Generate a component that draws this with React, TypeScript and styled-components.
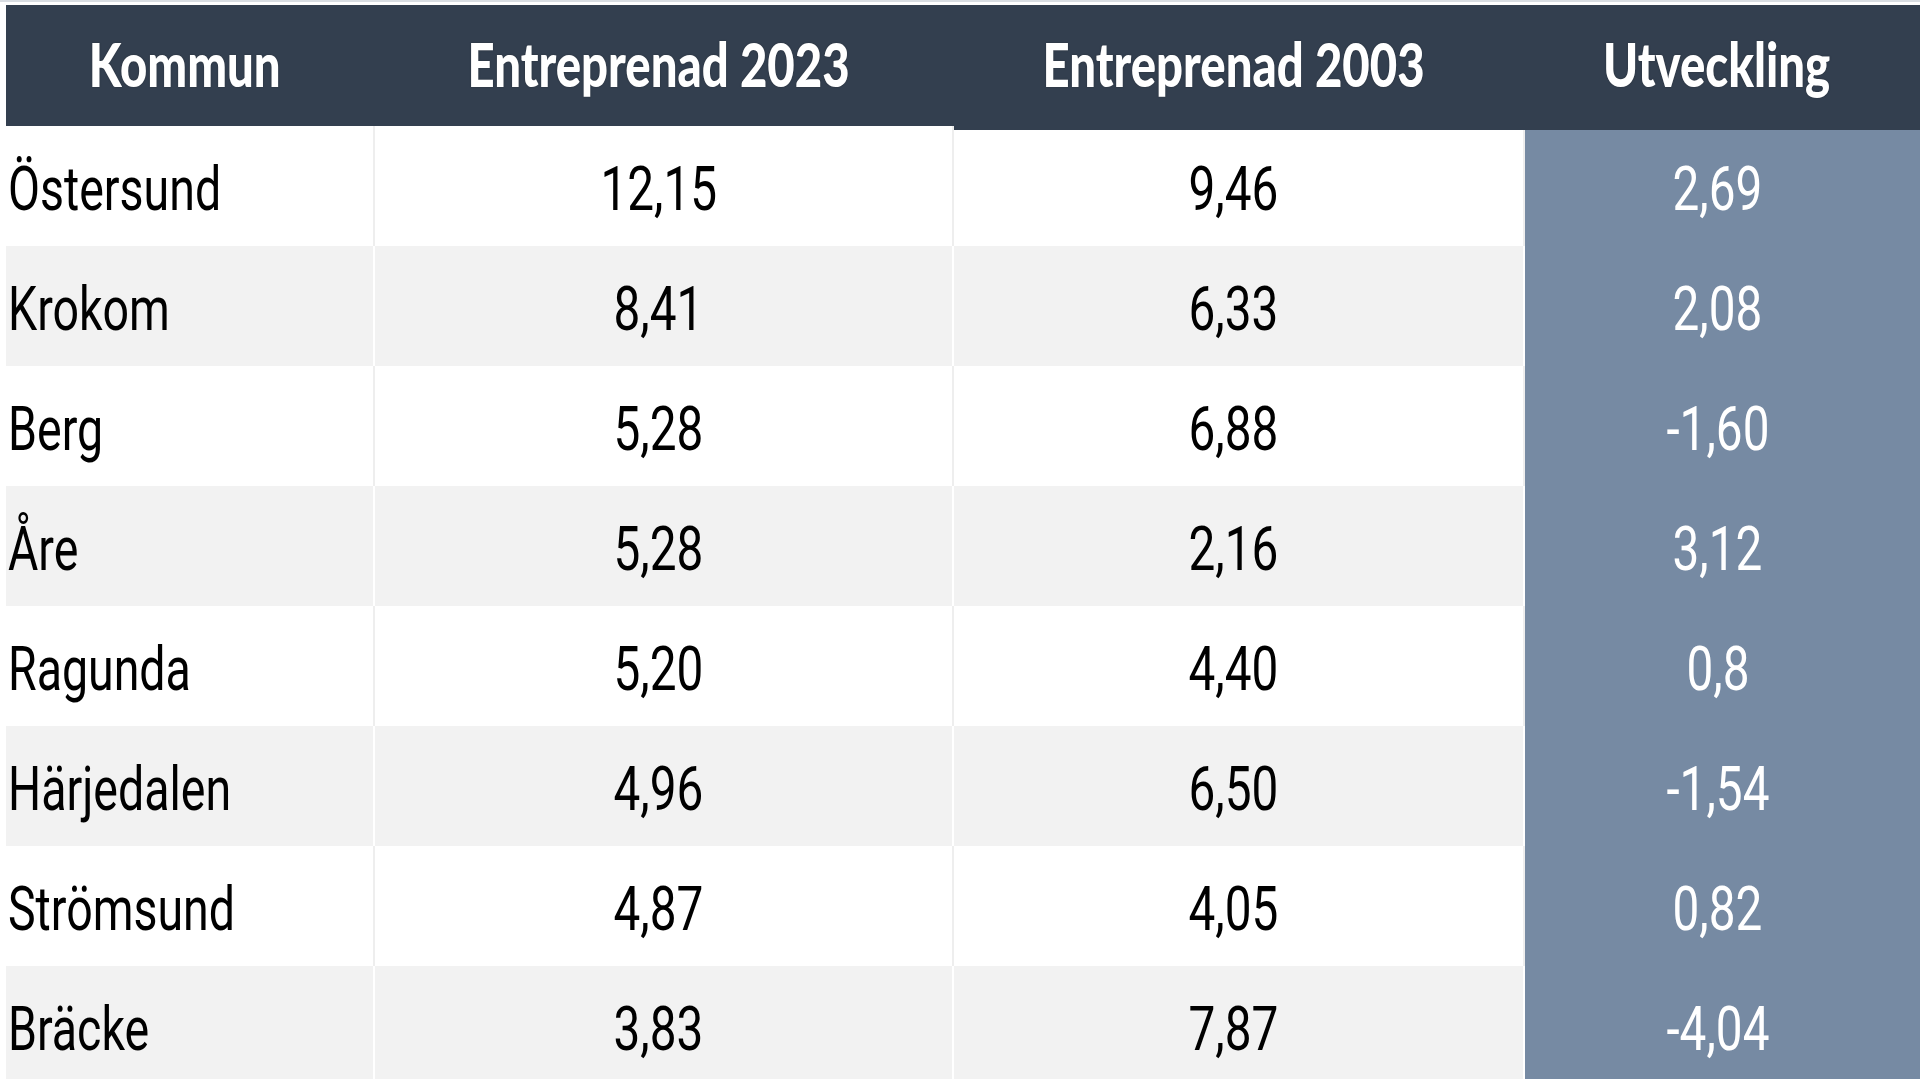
import styled, { createGlobalStyle } from "styled-components";

const rows = [
  { name: "Östersund", y2023: "12,15", y2003: "9,46", diff: "2,69" },
  { name: "Krokom", y2023: "8,41", y2003: "6,33", diff: "2,08" },
  { name: "Berg", y2023: "5,28", y2003: "6,88", diff: "-1,60" },
  { name: "Åre", y2023: "5,28", y2003: "2,16", diff: "3,12" },
  { name: "Ragunda", y2023: "5,20", y2003: "4,40", diff: "0,8" },
  { name: "Härjedalen", y2023: "4,96", y2003: "6,50", diff: "-1,54" },
  { name: "Strömsund", y2023: "4,87", y2003: "4,05", diff: "0,82" },
  { name: "Bräcke", y2023: "3,83", y2003: "7,87", diff: "-4,04" },
];

const App = () => {
  return (
    <>
      <GlobalStyle />
      <Page>
        <Table>
          <HeadCell>
            <HeadText>Kommun</HeadText>
          </HeadCell>
          <HeadCell>
            <HeadText>Entreprenad 2023</HeadText>
          </HeadCell>
          <HeadCell $extend>
            <HeadText>Entreprenad 2003</HeadText>
          </HeadCell>
          <HeadCell $extend>
            <HeadText>Utveckling</HeadText>
          </HeadCell>

          {rows.map((r, i) => (
            <Row key={r.name} $odd={i % 2 === 1}>
              <NameCell>
                <BodyText $left>{r.name}</BodyText>
              </NameCell>
              <NumCell>
                <BodyText>{r.y2023}</BodyText>
              </NumCell>
              <NumCell>
                <BodyText>{r.y2003}</BodyText>
              </NumCell>
              <DiffCell>
                <BodyText>{r.diff}</BodyText>
              </DiffCell>
            </Row>
          ))}
        </Table>
      </Page>
    </>
  );
};

export default App;

const GlobalStyle = createGlobalStyle`
  html, body {
    margin: 0;
    padding: 0;
    background: #ffffff;
    overflow: hidden;
  }
`;

const Page = styled.div`
  width: 1920px;
  height: 1079px;
  overflow: hidden;
  padding: 3px 0 0 6px;
  box-sizing: border-box;
  border-top: 2px solid #d9dde2;
`;

const Table = styled.div`
  display: grid;
  grid-template-columns: 369px 579px 571px 395px;
  grid-auto-rows: 120px;
  grid-template-rows: 121px;
  width: 1914px;
`;

const HeadCell = styled.div<{ $extend?: boolean }>`
  background: #333f4f;
  display: flex;
  align-items: center;
  justify-content: center;
  padding-right: 12px;
  position: relative;
  ${(p) => p.$extend && "box-shadow: 0 4px 0 #333f4f; z-index: 1;"}
`;

const HeadText = styled.span`
  display: inline-block;
  font-family: Lato, "Open Sans", sans-serif;
  font-weight: 900;
  font-size: 61px;
  color: #ffffff;
  white-space: nowrap;
  transform: scaleX(0.775);
  text-shadow: 0 0 2px rgba(0, 0, 0, 0.35);
  margin-top: -4px;
`;

const Row = styled.div<{ $odd: boolean }>`
  display: contents;
  --row-bg: ${(p) => (p.$odd ? "#f2f2f2" : "#ffffff")};
  --row-line: ${(p) => (p.$odd ? "#ffffff" : "#eeeeee")};
`;

const Cell = styled.div`
  display: flex;
  align-items: center;
  background: var(--row-bg);
  border-right: 2px solid var(--row-line);
  box-sizing: border-box;
  overflow: hidden;
`;

const NameCell = styled(Cell)`
  justify-content: flex-start;
  padding-left: 2px;
`;

const NumCell = styled(Cell)`
  justify-content: center;
  padding-right: 10px;
`;

const DiffCell = styled(Cell)`
  justify-content: center;
  padding-right: 10px;
  background: #768aa3;
  border-right: none;
  color: #ffffff;
`;

const BodyText = styled.span<{ $left?: boolean }>`
  display: inline-block;
  font-family: Roboto, "Liberation Sans", sans-serif;
  font-weight: 400;
  font-size: 62px;
  color: inherit;
  white-space: nowrap;
  transform: scaleX(${(p) => (p.$left ? 0.75 : 0.77)});
  transform-origin: ${(p) => (p.$left ? "left center" : "center")};
  margin-top: 4px;
`;
